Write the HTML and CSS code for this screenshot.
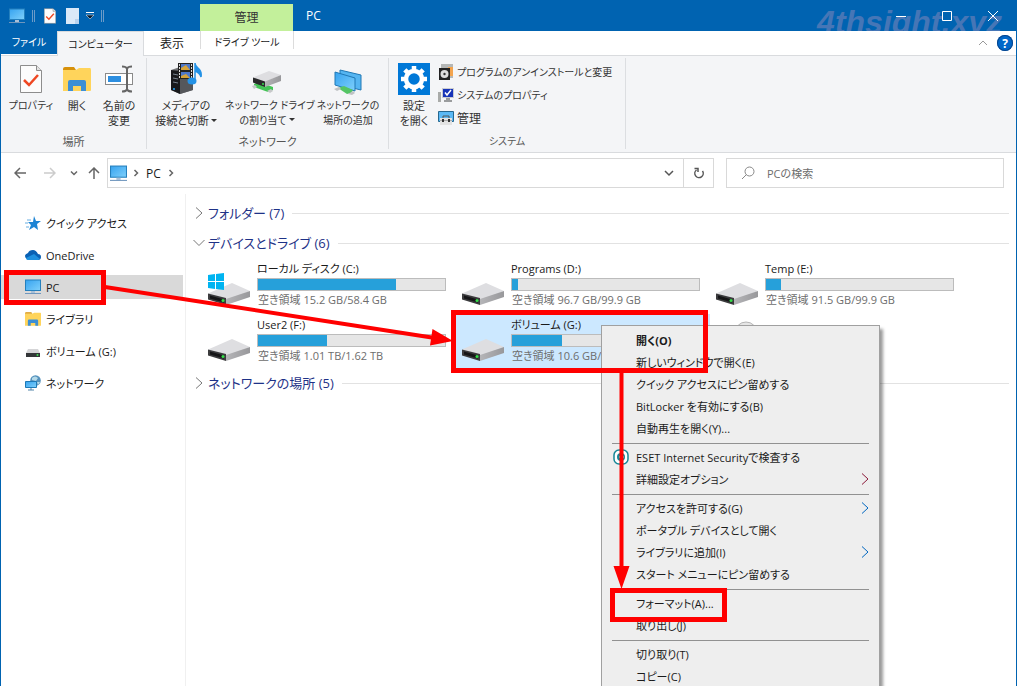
FILE: index.html
```html
<!DOCTYPE html>
<html lang="ja">
<head>
<meta charset="utf-8">
<meta name="viewport" content="width=device-width, initial-scale=1">
<title>PC</title>
<link rel="stylesheet" href="styles.css">
</head>
<body>
<svg class="sprite" aria-hidden="true">
  <defs>
    <linearGradient id="g-screen" x1="0" y1="0" x2="1" y2="1"><stop offset="0" stop-color="#36a3f0"/><stop offset="1" stop-color="#7fd0fb"/></linearGradient>
    <linearGradient id="g-metal" x1="0" y1="0" x2="1" y2="0"><stop offset="0" stop-color="#b5b5b8"/><stop offset="1" stop-color="#98989b"/></linearGradient>
    <symbol id="pc" viewBox="0 0 16 16"><rect x="0.5" y="1" width="15" height="10.5" fill="url(#g-screen)" stroke="#2580bd"/><path d="M6 12h4v2H6z" fill="#a8c0d8"/><path d="M0 14.500h16" stroke="#6f96bd"/></symbol>
    <symbol id="drive" viewBox="0 0 42 22"><path d="M0 10.500 24 0 42 8 18 18z" fill="#dedee1"/><path d="M18 16 42 8v6L18 22z" fill="url(#g-metal)"/><path d="M0 10.500 18 15v7L0 16.500z" fill="#3b3b3d"/><path d="M2 12.500 16 16.500v3L2 15.500z" fill="#151517"/><circle cx="15" cy="17.500" r="1.500" fill="#35e04a"/></symbol>
    <symbol id="folder" viewBox="0 0 28 26"><path d="M0 3Q0 1 2 1h9l2 3H0z" fill="#d7910a"/><path d="M0 4h13l3-2h11q1 0 1 2v20q0 1-1 1H0z" fill="#ffd45b"/><path d="M5 25V16q0-2 2-2h14q2 0 2 2v9h-5v-5h-8v5z" fill="#3d8fd4"/></symbol>
    <symbol id="doc" viewBox="0 0 22 28"><path d="M.5.500h16l5 5v22H.500z" fill="#fcfcfc" stroke="#8d8d8d"/><path d="M16.500.500v5h5" fill="#e3e3e3" stroke="#8d8d8d"/><path d="M4 15l5 5 9-10" fill="none" stroke="#ef4823" stroke-width="2.500"/></symbol>
    <symbol id="chev-r" viewBox="0 0 8 12"><path d="M1 .500 7 6 1 11.500" fill="none" stroke="currentColor"/></symbol>
    <symbol id="chev-d" viewBox="0 0 12 8"><path d="M.5 1 6 6.500 11.500 1" fill="none" stroke="currentColor"/></symbol>
    <symbol id="crumb" viewBox="0 0 6 8"><path d="M1.500 1 4.500 4l-3 3" fill="none" stroke="currentColor" stroke-width="1.500"/></symbol>
  </defs>
</svg>

<div class="window">
  <header class="titlebar">
    <span class="watermark">4thsight.xyz</span>
    <div class="quick">
      <svg class="i16"><use href="#pc"/></svg>
      <i class="bar"></i>
      <svg class="qdoc"><use href="#doc"/></svg>
      <svg class="qnew" viewBox="0 0 13 16"><path d="M0 0h9l4 0v16H0z" fill="#dbe9f8"/><path d="M9 16v-5h4v5z" fill="#b9d2ee"/></svg>
      <svg class="qmore" viewBox="0 0 8 8"><path d="M0 .500h8" stroke="#fff"/><path d="M0 3h8L4 7z" fill="#041a30" stroke="#fff" stroke-width=".500"/></svg>
      <i class="bar"></i>
    </div>
    <div class="context">管理</div>
    <h1 class="title">PC</h1>
    <div class="controls">
      <button aria-label="最小化"><svg viewBox="0 0 10 10"><path d="M0 5.500h10"/></svg></button>
      <button aria-label="最大化"><svg viewBox="0 0 10 10"><path d="M.5.500h9v9h-9z"/></svg></button>
      <button aria-label="閉じる"><svg viewBox="0 0 10 10"><path d="M0 0 10 10M10 0 0 10"/></svg></button>
    </div>
  </header>

  <nav class="tabs">
    <button class="tab file">ファイル</button>
    <button class="tab current">コンピューター</button>
    <button class="tab view">表示</button>
    <button class="tab tool">ドライブ ツール</button>
    <span class="tabs-end">
      <button aria-label="リボンの最小化"><svg class="fold" viewBox="0 0 10 6"><path d="M1 5 5 1l4 4"/></svg></button>
      <button class="help" aria-label="ヘルプ">?</button>
    </span>
  </nav>

  <section class="ribbon">
    <div class="group g-place">
      <div class="tools">
        <button class="tool-btn kana"><span class="pic"><svg width="22" height="28"><use href="#doc"/></svg></span>プロパティ</button>
        <button class="tool-btn"><span class="pic"><svg width="28" height="26"><use href="#folder"/></svg></span>開く</button>
        <button class="tool-btn"><span class="pic"><svg width="28" height="28" viewBox="0 0 28 28"><rect x=".5" y="8.500" width="27" height="11" fill="#fff" stroke="#8a8a8a"/><path d="M3 11h13v6H3z" fill="#2c8ee0"/><path d="M17 1.500q4 0 5 2 1-2 5-2M22 3v22M17 26.500q4 0 5-2 1 2 5 2" fill="none" stroke="#666" stroke-width="2"/></svg></span>名前の<br>変更</button>
      </div>
      <div class="group-name">場所</div>
    </div>
    <div class="group g-net">
      <div class="tools">
        <button class="tool-btn"><span class="pic"><svg width="32" height="32" viewBox="0 0 32 32"><path d="M1 7 10 4l13 3v20l-13 4-9-4z" fill="#707174"/><path d="M1 7l9 1v23l-9-4z" fill="#18191c"/><path d="M3 11l5 1M3 15l5 1M3 19l5 1" stroke="#78828e"/><path d="M10 8l13-1v20l-13 4z" fill="#55575b"/><circle cx="4" cy="26" r="1" fill="#25a8ff"/><path d="M8 0h15v16H8z" fill="#222"/><path d="M11 1h9v6h-9zM11 9h9v6h-9z" fill="#4e78ca"/><path d="M11 5l5-3 4 5h-9zM11 13l5-2 4 4h-9z" fill="#d6a33a"/><path d="M9.500 1v15M21.500 1v15" stroke="#ddd" stroke-dasharray="2 1"/><ellipse cx="22" cy="18" rx="4.500" ry="3.500" fill="#2492e6"/><path d="M25 18V0q0 3 3 5 4 3 3 9-1-4-6-6" fill="#2492e6" stroke="#2492e6" stroke-width="1.500"/></svg></span>メディアの<br>接続と切断<i class="caret"></i></button>
        <button class="tool-btn kana"><span class="pic low"><svg width="30" height="22" viewBox="0 0 30 22"><path d="M2 13l5-2 14 5v3l-5 2-14-5z" fill="#43c456"/><path d="M0 15l3-1 2 2-3 2zM15 20l4-2 2 2-3 2z" fill="#c6c8c9"/><path d="M1 6.500 17 0l12 4-16 7z" fill="#dedee1"/><path d="M13 10.500 29 4v6l-16 6z" fill="url(#g-metal)"/><path d="M1 6.500l12 4V16L1 11.500z" fill="#2a2a2c"/><circle cx="11" cy="13" r="1" fill="#35e04a"/></svg></span>ネットワーク ドライブ<br>の割り当て<i class="caret"></i></button>
        <button class="tool-btn kana"><span class="pic low"><svg width="28" height="26" viewBox="0 0 28 26"><path d="M6 1 27 6v15L6 16z" fill="#55b5f1" stroke="#2078b5"/><path d="M1 3l20 6v13L1 16z" fill="url(#g-screen)" stroke="#2078b5"/><path d="M4 19l6-2 9 4-2 3-4 1z" fill="#54c565"/><path d="M0 20l5-2 2 2-4 2zM14 25l5-3 2 2-3 2z" fill="#bfc2c4"/></svg></span>ネットワークの<br>場所の追加</button>
      </div>
      <div class="group-name">ネットワーク</div>
    </div>
    <div class="group g-sys">
      <div class="tools">
        <button class="tool-btn"><span class="pic"><svg width="32" height="32" viewBox="0 0 32 32"><path d="M0 0h32v32H0z" fill="#0078d7"/><g fill="none" stroke="#fff"><circle cx="16" cy="16" r="8" stroke-width="4.500"/><path d="M16 3v4M16 25v4M3 16h4M25 16h4M6.800 6.800l2.900 2.900M22.300 22.300l2.900 2.900M6.800 25.200l2.900-2.900M22.300 9.700l2.900-2.900" stroke-width="4.500"/></g></svg></span>設定<br>を開く</button>
        <div class="list">
          <button class="kana"><svg class="i16" viewBox="0 0 16 16"><path d="M3 0h12v14H3z" fill="#b5b7b6"/><path d="M10 3h5v9h-5z" fill="#f3a44e"/><path d="M1 4h11v12H1z" fill="#222"/><circle cx="6.500" cy="10" r="4" fill="#ddd"/><circle cx="6.500" cy="10" r="1.200" fill="#333"/></svg>プログラムのアンインストールと変更</button>
          <button class="kana"><svg class="i16" viewBox="0 0 16 16"><path d="M0 5h3v10H0z" fill="#a9aba9"/><path d="M4 1h12v10H4z" fill="#c9cbd2"/><path d="M5 2h10v8H5z" fill="#1734b8"/><path d="M7 5.500 9 8l4-5" fill="none" stroke="#fff" stroke-width="1.500"/><path d="M8 11h4v2h2v2H6v-2h2z" fill="#9a9c9e"/></svg>システムのプロパティ</button>
          <button><svg class="i16" viewBox="0 0 16 16"><path d="M.5 1.500h15v10H.500z" fill="#5bb9f5" stroke="#27688f"/><path d="M2 8h12v7H2z" fill="#e2e2e2"/><path d="M5 8V6h6v2" fill="none" stroke="#555"/><path d="M2 10.500h12" stroke="#aaa"/><path d="M4 9h2v3H4zM10 9h2v3h-2z" fill="#333"/></svg>管理</button>
        </div>
      </div>
      <div class="group-name kana">システム</div>
    </div>
  </section>

  <div class="address-row">
    <div class="nav">
      <button aria-label="戻る"><svg viewBox="0 0 12 12"><path d="M12 6H1M6 1 1 6l5 5"/></svg></button>
      <button class="off" aria-label="進む"><svg viewBox="0 0 12 12"><path d="M0 6h11M6 1l5 5-5 5"/></svg></button>
      <button class="hist" aria-label="最近表示した場所"><svg viewBox="0 0 12 12"><path d="M3 4.500l3 3 3-3"/></svg></button>
      <button class="up" aria-label="上へ"><svg viewBox="0 0 12 12"><path d="M6 12V1M1 6l5-5 5 5"/></svg></button>
    </div>
    <div class="address">
      <svg class="i17"><use href="#pc"/></svg>
      <svg class="crumb"><use href="#crumb"/></svg>
      <button class="place">PC</button>
      <svg class="crumb"><use href="#crumb"/></svg>
      <button class="drop" aria-label="以前の場所"><svg viewBox="0 0 10 8"><path d="M1 2l4 4 4-4"/></svg></button>
      <button class="reload" aria-label="最新の情報に更新"><svg viewBox="0 0 12 12"><path d="M9.500 4A4.200 4.200 0 1 1 3.500 3M1.500 1.500h3.500v3.500"/></svg></button>
    </div>
    <label class="search"><svg viewBox="0 0 14 14"><circle cx="8.500" cy="5.500" r="4.500"/><path d="M5.500 8.500 1 13"/></svg><input type="search" placeholder="PCの検索" aria-label="PCの検索"></label>
  </div>

  <div class="body">
    <nav class="side">
      <a href="#"><svg class="i16" viewBox="0 0 16 16"><path d="M9 1l2 5h5l-4 3 1 6-4-3-5 3 2-5-3-3h5z" fill="#1d84d4"/><path d="M2 5h4M0 8h3M1 12h3" stroke="#68aee2"/></svg>クイック アクセス</a>
      <a href="#"><svg class="i16" viewBox="0 0 16 16"><path d="M2 12Q0 11 0 9q0-2 3-3 1-3 5-3 3 0 5 4 3 0 3 3 0 3-3 3H3z" fill="#0a61b4"/><path d="M3 13q-2 0-2-2l8-4 6 5-2 1z" fill="#1e90df"/></svg>OneDrive</a>
      <a href="#" class="selected"><svg class="i16"><use href="#pc"/></svg>PC</a>
      <a href="#"><svg class="i16"><use href="#folder"/></svg>ライブラリ</a>
      <a href="#"><svg class="i16" viewBox="0 0 16 16"><path d="M3 6h10l2 4H1z" fill="#d5d5d7"/><path d="M1 10h14v4H1z" fill="#343638"/><circle cx="12.500" cy="12" r="1" fill="#3fdf55"/></svg>ボリューム (G:)</a>
      <a href="#"><svg class="i16" viewBox="0 0 16 16"><circle cx="10.500" cy="5.500" r="5.300" fill="#5592bd"/><path d="M7 3q3-3 6 0l-2 3-4-1zM12 7l3 0-2 3z" fill="#b4d9e8"/><path d="M.5 6.500h11v6H.500z" fill="url(#g-screen)" stroke="#1d79b6"/><path d="M3 15h6M6 13v2" stroke="#5585a9"/></svg>ネットワーク</a>
    </nav>
    <main class="main">
      <h2 class="head"><svg class="cr"><use href="#chev-r"/></svg>フォルダー (7)</h2>
      <h2 class="head"><svg class="cd"><use href="#chev-d"/></svg>デバイスとドライブ (6)</h2>
      <div class="drives">
        <div class="drive"><svg class="disk" viewBox="0 0 42 32"><use href="#drive" y="10" width="42" height="22"/><path d="M0 2l7-1v7H0zM8 1l8-1v8H8zM0 9h7v7l-7-1zM8 9h8v8l-8-1z" fill="#00b4f1"/></svg><div class="info"><b>ローカル ディスク (C:)</b><div class="meter"><i style="width:74%"></i></div><span>空き領域 15.2 GB/58.4 GB</span></div></div>
        <div class="drive"><svg class="disk" viewBox="0 0 42 32"><use href="#drive" y="10" width="42" height="22"/></svg><div class="info"><b>Programs (D:)</b><div class="meter"><i style="width:3%"></i></div><span>空き領域 96.7 GB/99.9 GB</span></div></div>
        <div class="drive"><svg class="disk" viewBox="0 0 42 32"><use href="#drive" y="10" width="42" height="22"/></svg><div class="info"><b>Temp (E:)</b><div class="meter"><i style="width:8%"></i></div><span>空き領域 91.5 GB/99.9 GB</span></div></div>
        <div class="drive"><svg class="disk" viewBox="0 0 42 32"><use href="#drive" y="10" width="42" height="22"/></svg><div class="info"><b>User2 (F:)</b><div class="meter"><i style="width:37%"></i></div><span>空き領域 1.01 TB/1.62 TB</span></div></div>
        <div class="drive picked"><svg class="disk" viewBox="0 0 42 32"><use href="#drive" y="10" width="42" height="22"/></svg><div class="info"><b>ボリューム (G:)</b><div class="meter"><i style="width:27%"></i></div><span>空き領域 10.6 GB/</span></div></div>
        <div class="drive"><svg class="disc" viewBox="0 0 24 24"><circle cx="12" cy="12" r="11" fill="#e6e6e6" stroke="#b5b5b5"/></svg></div>
      </div>
      <h2 class="head"><svg class="cr"><use href="#chev-r"/></svg>ネットワークの場所 (5)</h2>
    </main>
  </div>

  <div class="menu" role="menu">
    <button role="menuitem" class="default">開く(O)</button>
    <button role="menuitem">新しいウィンドウで開く(E)</button>
    <button role="menuitem">クイック アクセスにピン留めする</button>
    <button role="menuitem">BitLocker を有効にする(B)</button>
    <button role="menuitem">自動再生を開く(Y)...</button>
    <hr>
    <button role="menuitem"><svg class="eset" viewBox="0 0 16 16"><rect x="1" y="1" width="14" height="14" rx="5" fill="#fff" stroke="#158797" stroke-width="1.500"/><circle cx="8" cy="8" r="4" fill="#158797"/><path d="M6 8h5" stroke="#fff"/></svg>ESET Internet Securityで検査する</button>
    <button role="menuitem">詳細設定オプション<svg class="sub red"><use href="#chev-r"/></svg></button>
    <hr>
    <button role="menuitem">アクセスを許可する(G)<svg class="sub"><use href="#chev-r"/></svg></button>
    <button role="menuitem">ポータブル デバイスとして開く</button>
    <button role="menuitem">ライブラリに追加(I)<svg class="sub"><use href="#chev-r"/></svg></button>
    <button role="menuitem">スタート メニューにピン留めする</button>
    <hr>
    <button role="menuitem">フォーマット(A)...</button>
    <button role="menuitem">取り出し(J)</button>
    <hr>
    <button role="menuitem">切り取り(T)</button>
    <button role="menuitem">コピー(C)</button>
  </div>

  <svg class="marks" width="1017" height="686" viewBox="0 0 1017 686" aria-hidden="true">
    <g fill="none" stroke="#f00" stroke-width="5">
      <path d="M6.500 272.500h97v30h-97zM453.500 312.500h252v58h-252zM612.500 590.500h112v29h-112z"/>
      <path d="M105 287 435 338M621.500 372v196" stroke-width="4"/>
    </g>
    <path d="M432.500 329 453 341l-23 4.500zM613.500 566h16L621.500 589z" fill="#f00"/>
  </svg>
</div>
</body>
</html>
```
FILE: styles.css
```css
* { box-sizing: border-box; }
body {
  margin: 0;
  font: 11px/15px "Open Sans", "Noto Sans CJK JP", sans-serif;
  font-feature-settings: "palt";
  color: #1a1a1a;
}
button { margin: 0; padding: 0; border: 0; background: none; font: inherit; color: inherit; font-feature-settings: inherit; }
svg { display: block; flex: none; }
.sprite { position: absolute; width: 0; height: 0; }
.i16 { width: 16px; height: 16px; }
.i17 { width: 17px; height: 17px; }

.window {
  position: relative;
  display: flex;
  flex-direction: column;
  height: 100vh;
  overflow: hidden;
  border: solid #0063b1;
  border-width: 0 1px;
  background: #fff;
}

/* Title bar */
.titlebar { position: relative; display: flex; height: 31px; overflow: hidden; background: #0063b1; color: #fff; }
.watermark { position: absolute; right: 14px; top: 5px; font: italic bold 32px/34px "Liberation Sans", sans-serif; color: #4676b6; }
.quick { display: flex; align-items: center; gap: 7px; width: 199px; padding-left: 8px; }
.bar { width: 3px; height: 12px; border: solid #6c9bc8; border-width: 0 1px; }
.qdoc { width: 12px; height: 16px; margin-left: 2px; }
.qnew { width: 13px; height: 16px; margin-left: 3px; }
.qmore { width: 8px; height: 8px; }
.context { width: 93px; margin-top: 4px; font-size: 12px; line-height: 27px; text-align: center; background: #c3f09b; color: #333; }
.title { margin: 0; padding-left: 13px; font-size: 12px; font-weight: 400; line-height: 31px; }
.controls { position: relative; display: flex; margin-left: auto; }
.controls button { display: grid; place-items: center; width: 46px; }
.controls svg { width: 10px; height: 10px; fill: none; stroke: #fff; }

/* Tabs */
.tabs { display: flex; height: 25px; border-bottom: 1px solid #d9dbde; }
.tab { font-size: 10px; text-align: center; }
.file { width: 56px; margin-bottom: 1px; background: #0063b1; color: #fff; }
.current { width: 87px; margin-bottom: -1px; border: solid #d9dbde; border-width: 1px 1px 0; background: #f4f5f7; }
.view { width: 56px; font-size: 12px; }
.tool { width: 94px; margin-bottom: 6px; padding-top: 4px; border: solid #dcdcdc; border-width: 0 1px; }
.tabs-end { display: flex; align-items: center; gap: 9px; margin-left: auto; padding-right: 3px; }
.fold { width: 10px; height: 6px; fill: none; stroke: #999; }
.help { width: 16px; height: 16px; border-radius: 8px; background: #0067c9; box-shadow: inset 0 0 0 1px #07458c; color: #fff; font-size: 12px; font-weight: 700; }

/* Ribbon */
.ribbon { display: flex; height: 97px; padding: 2px 0 3px; border-bottom: 1px solid #d9dbde; background: #f4f5f7; color: #333; }
.group { display: flex; flex-direction: column; justify-content: space-between; border-right: 1px solid #dcdee1; }
.g-place { width: 146px; }
.g-net { width: 242px; }
.g-sys { width: 237px; }
.tools { display: flex; }
.tool-btn { display: block; padding-top: 5px; line-height: 15px; text-align: center; white-space: nowrap; align-self: flex-start; }
.g-place .tool-btn { width: 52px; }
.g-place .tool-btn:first-child { width: 60px; }
.g-place .tool-btn:nth-child(2) { width: 32px; }
.g-net .tool-btn { width: 78px; }
.g-net .tool-btn:nth-child(2) { width: 84px; }
.g-sys .tool-btn { width: 48px; }
.g-sys .tools { padding-left: 1px; }
.tool-btn.kana, .list .kana, .group-name.kana { font-size: 10px; }
.pic { display: grid; place-items: center; height: 32px; margin-bottom: 3px; }
.low { padding-top: 6px; }
.g-net .tool-btn:nth-child(2) { display: flex; flex-direction: column; align-items: center; }
.g-net .tool-btn:nth-child(2) { display: block; }
.caret { display: inline-block; margin-left: 2px; border: solid transparent; border-width: 3px 3px 0; border-top-color: #333; vertical-align: 3px; }
.list { display: flex; flex-direction: column; gap: 7px; padding-top: 6px; }
.list button { display: flex; align-items: center; gap: 3px; height: 16px; font-size: 12px; white-space: nowrap; }
.group-name { text-align: center; color: #555; }

/* Address row */
.address-row { display: flex; padding: 5px 12px 6px 0; height: 41px; }
.nav { display: flex; width: 106px; padding-left: 4px; }
.nav button { display: grid; place-items: center; width: 30px; }
.nav .hist { width: 17px; }
.nav .up { width: 24px; }
.nav svg { width: 12px; height: 12px; fill: none; stroke: #666; stroke-width: 1.5; }
.nav .off svg { stroke: #ccc; }
.address { display: flex; flex: 1; align-items: center; border: 1px solid #d9d9d9; padding-left: 2px; }
.crumb { width: 6px; height: 8px; margin: 0 6px; color: #666; }
.place { font-size: 12px; margin: 0 1px; }
.drop { width: 29px; height: 100%; margin-left: auto; display: grid; place-items: center; }
.drop svg { width: 10px; height: 8px; fill: none; stroke: #555; stroke-width: 1.5; }
.reload { display: grid; place-items: center; width: 30px; height: 100%; border-left: 1px solid #d9d9d9; }
.reload svg { width: 12px; height: 12px; fill: none; stroke: #555; stroke-width: 1.5; }
.search { display: flex; align-items: center; gap: 12px; width: 278px; margin-left: 12px; padding-left: 14px; border: 1px solid #d9d9d9; }
.search svg { width: 14px; height: 14px; fill: none; stroke: #888; }
.search input { flex: 1; min-width: 0; border: 0; padding: 0; outline: 0; background: none; font: inherit; font-feature-settings: inherit; }
.search input::placeholder { color: #6d6d6d; opacity: 1; }

/* Body */
.body { display: flex; flex: 1; }
.side { display: flex; flex-direction: column; gap: 8px; width: 185px; padding: 17px 2px 0 0; border-right: 1px solid #f0f0f0; }
.side a { display: flex; align-items: center; gap: 5px; height: 24px; padding-left: 24px; color: inherit; text-decoration: none; }
.side .selected { background: #d9d9d9; }
.main { flex: 1; padding: 4px 7px 0 7px; }
.head { display: flex; align-items: center; height: 30px; margin: 0; font-size: 13px; font-weight: 400; color: #1e3287; white-space: nowrap; }
.head::after { content: ""; flex: 1; height: 1px; margin-left: 8px; background: #e2e2e2; }
.head svg { color: #777; }
.cr { width: 8px; height: 12px; margin: 0 5px 0 2px; }
.cd { width: 12px; height: 8px; margin-right: 3px; }
.drives { display: grid; grid-template-columns: repeat(3, 254px); grid-template-rows: 56px 54px; padding-left: 9px; }
.drive { display: flex; padding: 3px 0 0 6px; gap: 7px; }
.picked { background: #cce8ff; }
.disk { width: 42px; height: 32px; margin-top: 12px; }
.disc { width: 24px; height: 24px; margin: 4px 0 0 18px; }
.info { width: 189px; white-space: nowrap; }
.info b { display: block; font-weight: 400; }
.info span { display: block; padding-left: 1px; color: #6d6d6d; }
.meter { height: 13px; margin: 2px 0 1px; border: 1px solid #bcbcbc; background: #e6e6e6; }
.meter i { display: block; height: 100%; background: #26a0da; }

/* Context menu */
.menu {
  position: absolute;
  left: 600px;
  top: 325px;
  width: 279px;
  padding: 3px 2px;
  border: 1px solid #a0a0a0;
  background: #eee;
  box-shadow: 3px 4px 3px #0006;
}
.menu button { position: relative; display: flex; align-items: center; width: 100%; height: 22px; padding-left: 32px; white-space: nowrap; }
.menu .default { font-weight: 700; }
.menu hr { height: 1px; margin: 4px 8px 2px; border: 0; background: #919191; }
.eset { position: absolute; left: 9px; top: 3px; width: 16px; height: 16px; }
.sub { width: 8px; height: 12px; margin-left: auto; margin-right: 8px; color: #0067c0; }
.sub.red { color: #8b1a3a; }

.marks { position: absolute; left: -1px; top: 0; }
```
